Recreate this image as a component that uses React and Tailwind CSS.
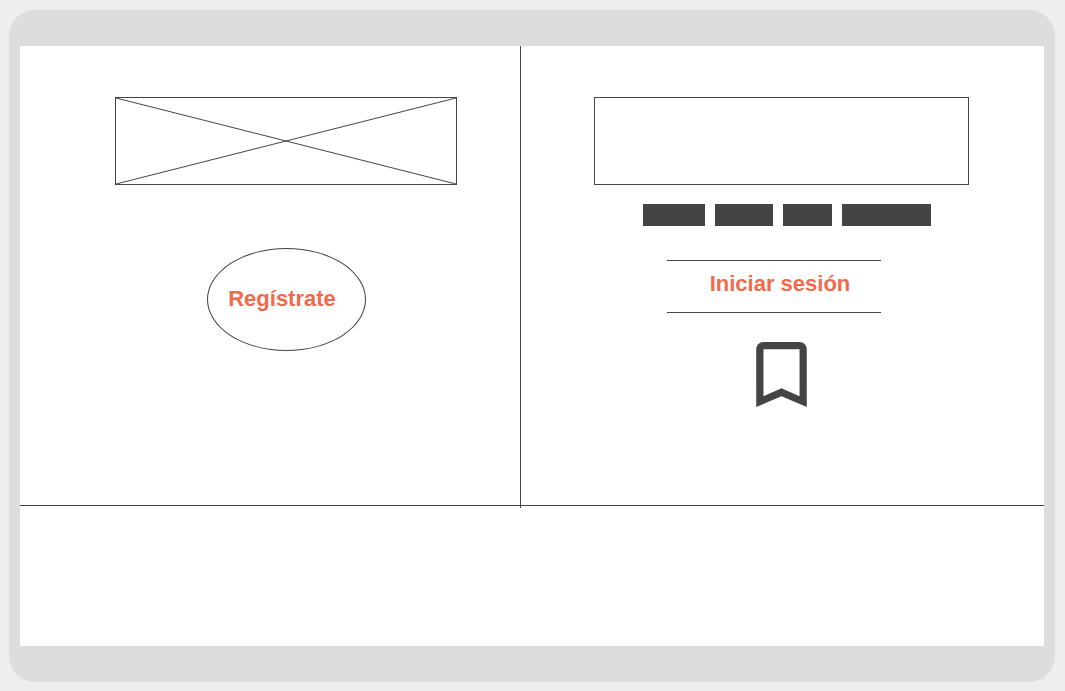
const tabs = ["w-[62px]", "w-[58px]", "w-[49px]", "w-[89px]"];

function ImagePlaceholder() {
  return (
    <div className="h-[88px] w-full max-w-[342px] border border-[#444]">
      <svg
        className="block h-full w-full"
        viewBox="0 0 340 86"
        preserveAspectRatio="none"
        fill="none"
        stroke="#444"
        strokeWidth="1"
        aria-hidden="true"
      >
        <path d="M0 0L340 86M0 86L340 0" />
      </svg>
    </div>
  );
}

function BookmarkIcon() {
  return (
    <svg className="h-[65px] w-[51px]" viewBox="5 3 14 18" fill="#444" aria-hidden="true">
      <path d="M17 3H7c-1.1 0-2 .9-2 2v16l7-3 7 3V5c0-1.1-.9-2-2-2zm0 15l-5-2.18L7 18V5h10v13z" />
    </svg>
  );
}

export default function App() {
  return (
    <div className="flex min-h-screen bg-[#eee] pt-[10px] pr-[10px] pb-[9px] pl-[9px] font-['Liberation_Sans',Arial,sans-serif]">
      <div className="flex flex-1 rounded-[26px] bg-[#ddd] px-[11px] py-9">
        <main className="flex flex-1 flex-col bg-white">
          <div className="grid grid-cols-[500fr_1px_523fr] border-b border-[#444]">
            <section className="flex flex-col items-center pt-[51px] pb-[154px] pl-8">
              <ImagePlaceholder />
              <button
                type="button"
                className="mt-[63px] h-[103px] w-[159px] rounded-[50%] border border-[#444] pr-2 pb-[2px] text-[22px] font-bold text-[#f4694c]"
              >
                Regístrate
              </button>
            </section>
            <div className="-mb-[3px] bg-[#444]" />
            <section className="flex flex-col items-center pt-[51px] pr-[2px]">
              <div className="h-[88px] w-full max-w-[375px] border border-[#444]" />
              <div className="mt-[19px] ml-[10px] flex gap-[10px]">
                {tabs.map((width) => (
                  <div key={width} className={`h-[22px] bg-[#444] ${width}`} />
                ))}
              </div>
              <button
                type="button"
                className="mt-[34px] mr-[15px] h-[53px] w-[214px] border-y border-[#444] pb-[6px] pl-3 text-[22px] font-bold text-[#f4694c]"
              >
                Iniciar sesión
              </button>
              <button type="button" aria-label="Guardar" className="mt-[29px]">
                <BookmarkIcon />
              </button>
            </section>
          </div>
        </main>
      </div>
    </div>
  );
}
